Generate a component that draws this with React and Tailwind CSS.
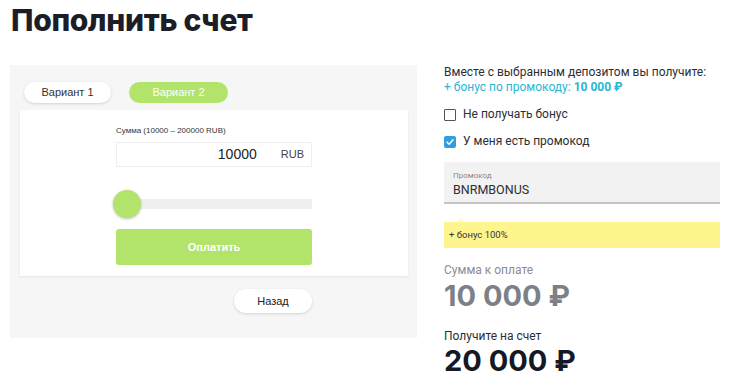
export default function App() {
  return (
    <div className="w-[732px] h-[389px] bg-white overflow-hidden relative font-['Inter',sans-serif]">
      <h1 className="pl-[11px] pt-[1px] text-[30px] leading-[38px] font-extrabold text-[#1b1e26] tracking-[-0.3px]">
        Пополнить счет
      </h1>
      <div className="flex mt-[26px]">
        {/* left widget */}
        <div className="ml-[10px] w-[407px] h-[273px] bg-[#f6f6f6] pt-[17px] pl-[10px] pr-[9px] font-['Liberation_Sans',Arial,sans-serif]">
          <div className="flex gap-[18px] pl-[4px]">
            <div className="w-[87px] h-[21px] rounded-full bg-white shadow-[0_1px_3px_rgba(0,0,0,0.15)] flex items-center justify-center text-[11px] text-[#333]">
              Вариант 1
            </div>
            <div className="w-[99px] h-[21px] rounded-full bg-[#b2e36a] flex items-center justify-center text-[11px] text-white">
              Вариант 2
            </div>
          </div>
          <div className="mt-[7px] h-[166px] bg-white shadow-[0_1px_2px_rgba(0,0,0,0.08)] flex flex-col items-center pt-[16px]">
            <div className="w-[196px]">
              <div className="text-[8px] leading-[10px] text-[#333]">Сумма (10000 – 200000 RUB)</div>
              <div className="mt-[6px] h-[25px] border border-[#eeeeee] flex items-center justify-end pr-[7px]">
                <span className="text-[14px] text-[#222] mr-[24px]">10000</span>
                <span className="text-[11px] text-[#444]">RUB</span>
              </div>
              <div className="relative mt-[23px] h-[28px] flex items-center">
                <div className="w-full h-[10px] bg-[#eef0f2]" />
                <div className="absolute left-[-3px] top-0 w-[28px] h-[28px] rounded-full bg-[#b2e36a] shadow-[0_1px_3px_rgba(0,0,0,0.25)]" />
              </div>
              <div className="mt-[11px] h-[36px] rounded-[3px] bg-[#b2e36a] flex items-center justify-center text-[11px] font-bold text-white">
                Оплатить
              </div>
            </div>
          </div>
          <div className="flex justify-end pr-[96px] mt-[13px]">
            <div className="w-[78px] h-[24px] rounded-full bg-white shadow-[0_1px_3px_rgba(0,0,0,0.15)] flex items-center justify-center text-[11px] text-[#222]">
              Назад
            </div>
          </div>
        </div>

        {/* right column */}
        <div className="ml-[27px] w-[276px] text-[#2b2e35] font-['Roboto',sans-serif]">
          <div className="text-[12px] leading-[15px]">Вместе с выбранным депозитом вы получите:</div>
          <div className="text-[12px] leading-[15px] text-[#2bb5d6]">
            + бонус по промокоду: <span className="font-bold">10 000 ₽</span>
          </div>
          <label className="flex items-center gap-[7px] mt-[12px] text-[12px] leading-[15px]">
            <span className="w-[12px] h-[12px] border border-[#555] rounded-[1px] bg-white" />
            Не получать бонус
          </label>
          <label className="flex items-center gap-[7px] mt-[12px] text-[12px] leading-[15px]">
            <span className="w-[12px] h-[12px] rounded-[2px] bg-[#2f9fe0] flex items-center justify-center">
              <svg viewBox="0 0 12 12" className="w-[10px] h-[10px]">
                <path d="M2.5 6.2 L5 8.6 L9.6 3.4" fill="none" stroke="white" strokeWidth="1.8" strokeLinecap="round" strokeLinejoin="round" />
              </svg>
            </span>
            У меня есть промокод
          </label>
          <div className="mt-[13px] h-[42px] bg-[#f2f2f2] border-b-2 border-[#c4c4c4] pl-[9px] pt-[9px]">
            <div className="text-[8px] leading-[10px] text-[#8a8a8a]">Промокод</div>
            <div className="text-[12.5px] leading-[16px] text-[#2b2e35] mt-[1px]">BNRMBONUS</div>
          </div>
          <div className="relative mt-[18px] h-[26px] bg-[#fff58f] flex items-center pl-[5px] text-[9.5px] text-[#333]">
            <span className="absolute left-[12px] top-[-5px] w-0 h-0 border-l-[5px] border-r-[5px] border-b-[5px] border-l-transparent border-r-transparent border-b-[#fffbd0]" />
            + бонус 100%
          </div>
          <div className="mt-[15px] text-[12px] leading-[15px] text-[#8a8d92]">Сумма к оплате</div>
          <div className="text-[29px] leading-[36px] font-bold text-[#7d8187] font-['Inter',sans-serif]">10 000 ₽</div>
          <div className="mt-[15px] text-[12px] leading-[15px] text-[#2b2e35]">Получите на счет</div>
          <div className="text-[29px] leading-[34px] font-bold text-[#141925] font-['Inter',sans-serif]">20 000 ₽</div>
        </div>
      </div>
    </div>
  );
}
